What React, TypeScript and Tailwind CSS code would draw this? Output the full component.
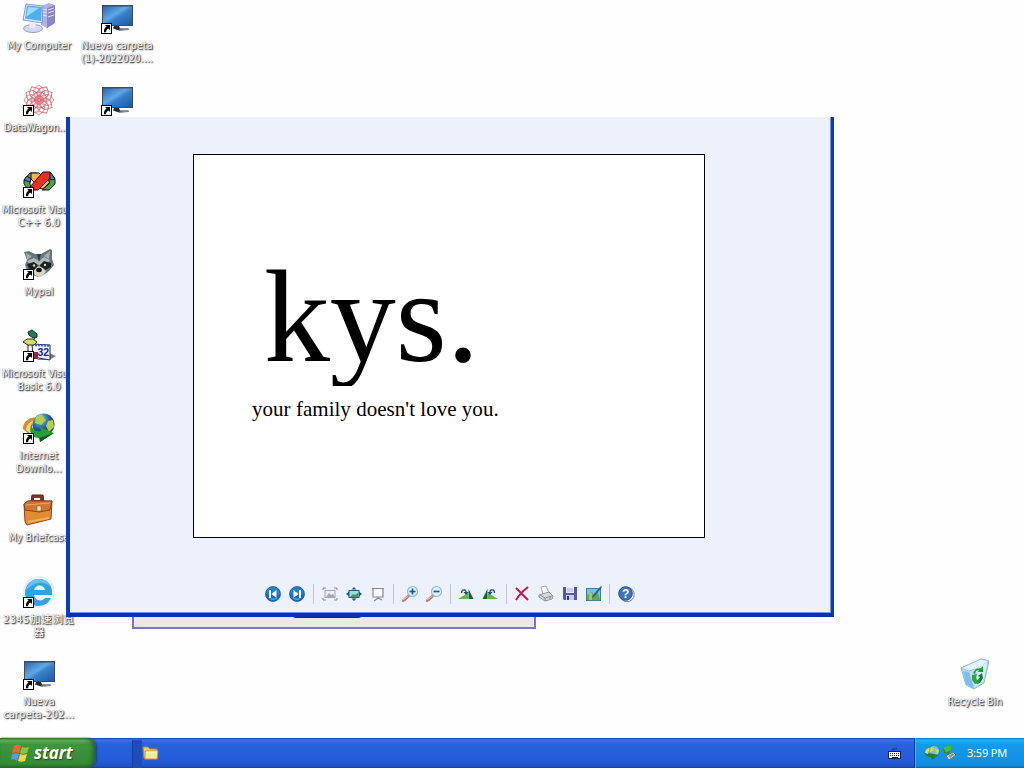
import React from "react";

type IconProps = { children: React.ReactNode };

const Glyph32 = ({ children }: IconProps) => (
  <svg width="32" height="34" viewBox="0 0 32 34" className="block overflow-visible">
    {children}
  </svg>
);

const ShortcutArrow = () => (
  <g>
    <rect x="0.5" y="20.5" width="10" height="10" fill="#fff" stroke="#000" />
    <path d="M4 22h5v5l-1.6-1.6C5.8 26.4 5 27.500 5 29.200H3c-.3-2.600.8-4.200 2.600-5.600z" fill="#000" />
  </g>
);

const Monitor = () => (
  <Glyph32>
    <defs>
      <linearGradient id="screen" x1="0" y1="0" x2="1" y2="1">
        <stop offset="0" stopColor="#2a67b4" />
        <stop offset="0.42" stopColor="#62a8e4" />
        <stop offset="0.55" stopColor="#3a80cb" />
        <stop offset="1" stopColor="#1d58a4" />
      </linearGradient>
    </defs>
    <rect x="1" y="2" width="31" height="21" fill="#3f4c58" />
    <rect x="2" y="3.500" width="29" height="18.500" fill="url(#screen)" />
    <path d="M13 23h5l1 2.500h8l1 1.500-10 .5-6-2z" fill="#222b30" />
    <path d="M18 27l10-.8" stroke="#839184" strokeWidth="1.200" />
    <ShortcutArrow />
  </Glyph32>
);

const Computer = () => (
  <Glyph32>
    <path d="M18 3l8-3 6 2v18l-8 5-6-3z" fill="#b3b1e2" />
    <path d="M24 5l8-3v18l-8 5z" fill="#8a86c9" />
    <path d="M19 6l5 1M19 9l5 1M19 12l5 1M25 7l6-2M25 10l6-2M25 14l6-2" stroke="#e2e1f8" />
    <path d="M3 1l17 2-1 17-19-3z" fill="#e2e8f8" stroke="#6f83b8" strokeWidth=".8" />
    <path d="M4 2.500l15 1.500-1 14L2 15.500z" fill="#4bb0ed" />
    <path d="M5 4l11 1-13 9z" fill="#9bdcfa" />
    <ellipse cx="10" cy="25.500" rx="9.500" ry="4" fill="#d5d8ee" stroke="#8388b1" strokeWidth=".8" />
    <path d="M6 19l7 1-1 5H7z" fill="#e8ebf9" />
  </Glyph32>
);

const petals = [0, 30, 60, 90, 120, 150, 180, 210, 240, 270, 300, 330];
const Atom = () => (
  <Glyph32>
    <g fill="none" stroke="#db6670" strokeWidth="0.9">
      {petals.map((a) => (
        <path key={a} d="M16 14C6 7 12 3 16 0c4 3 10 7 0 14" transform={`rotate(${a} 16 15)`} />
      ))}
      <circle cx="16" cy="15" r="8" />
      <circle cx="16" cy="15" r="4.500" />
    </g>
    <ShortcutArrow />
  </Glyph32>
);

const VisualCpp = () => (
  <Glyph32>
    <g stroke="#111" strokeWidth="1" strokeLinejoin="round">
      <path d="M1 13l6-7h7l-7 6v6l3 3H4l-3-4z" fill="#45a752" />
      <path d="M1 13l3-4 4 3-1 3z" fill="#4b83cf" />
      <path d="M8 6h8l3 3-7 7-4-4z" fill="#f5b63c" />
      <path d="M24 6h4l4 6v5l-6 6h-7l7-6V9z" fill="#49a646" />
      <path d="M14 21l9-9 4 3-7 7z" fill="#f7bd36" />
      <path d="M25 6h3l4 6-4 1z" fill="#4b83cf" />
      <path d="M7 20L20 5h7v6L15 23H8z" fill="#e43420" />
    </g>
    <ShortcutArrow />
  </Glyph32>
);

const Raccoon = () => (
  <Glyph32>
    <path d="M1 3l5-1 6 3h6l9-5 2 1v9l2 6-5 6-7 5-4 1-5-2-6-5-2-5 2-5z" fill="#66767c" />
    <path d="M3 4l6 3-5 4zM27 2l-6 5 5 3z" fill="#a1afb2" />
    <path d="M4 12l7-3 5 3 5-4 6 3-2 3-9 2-9 0z" fill="#aebaba" />
    <path d="M4 15l7-2 4 3-3 5-6-1zM17 16l4-4 7 2 0 4-6 3-4-1z" fill="#1b2326" />
    <circle cx="11" cy="16.500" r="1.200" fill="#e6d9b4" />
    <circle cx="22" cy="16" r="1.200" fill="#e6d9b4" />
    <path d="M10 23l3-4 3-2 4 2 3 3-3 5-4 1-4-2z" fill="#d5d4c6" />
    <ellipse cx="16" cy="21" rx="2.800" ry="2.200" fill="#101010" />
    <path d="M14 5l2 8 2-8" fill="#303b40" />
    <ShortcutArrow />
  </Glyph32>
);

const VisualBasic = () => (
  <Glyph32>
    <path d="M26 22l7 3-7 4H14z" fill="#7d7d7d" />
    <path d="M9 13l18 1v15l-17-3z" fill="#f3f5ff" stroke="#25256d" />
    <path d="M9 14l18 1" stroke="#4969c7" strokeWidth="2" strokeDasharray="2 1" />
    <text x="14.500" y="25" fontSize="10.500" fontWeight="700" fill="#22229b" fontFamily="Liberation Sans, sans-serif">32</text>
    <path d="M5 1l4-2 5 4v3l-4 1-4-3z" fill="#257b52" stroke="#172b1d" />
    <path d="M12 7l-3 4" stroke="#222" />
    <path d="M0 11l4-3h6l4 3-3 3H5z" fill="#d8d86e" stroke="#2d3717" />
    <path d="M5 14v6" stroke="#222" />
    <path d="M11 21h4v7h-4z" fill="#9d243f" />
    <ShortcutArrow />
  </Glyph32>
);

const DownloadGlobe = () => (
  <Glyph32>
    <defs>
      <radialGradient id="globe" cx="0.35" cy="0.25">
        <stop offset="0" stopColor="#c5e5ff" />
        <stop offset="0.5" stopColor="#428ed0" />
        <stop offset="1" stopColor="#185089" />
      </radialGradient>
    </defs>
    <path d="M0 16C0 7 9 3 14 5l-3 7c-4 1-5 4-4 10z" fill="#e78430" />
    <path d="M3 17c0-5 4-9 9-10l-4 7-1 6z" fill="#f7d969" />
    <circle cx="20.500" cy="11.500" r="11" fill="url(#globe)" />
    <path d="M13 4l6-3 1 3 3 3-5 5-6-2zM25 8l5-1 1 7-5 5-3-6z" fill="#b5cd48" />
    <path d="M9 10c-1 6 3 9 9 8l-1-4 14 6-14 9v-4C10 26 4 20 9 10z" fill="#299d35" />
    <path d="M16 25l15-5-14 9z" fill="#11581c" />
    <ShortcutArrow />
  </Glyph32>
);

const Briefcase = () => (
  <Glyph32>
    <path d="M8 7l1-7h11l1 7" fill="#8c302b" stroke="#66201d" />
    <path d="M11 5V3h6v2" fill="#fff" />
    <path d="M1 9l4-3h24l-1 18-24 6-2-3z" fill="#e38a35" stroke="#8e481d" />
    <path d="M1 9l4-3h24l-2 9-11 2-14-2z" fill="#ce7635" stroke="#8b431e" />
    <path d="M3 10l24-2" stroke="#eeaa61" />
    <path d="M5 27l21-4" stroke="#f0b25c" strokeWidth="2" />
    <rect x="14" y="11" width="4" height="5" fill="#f9e7ad" stroke="#996130" strokeWidth=".6" />
  </Glyph32>
);

const BrowserE = () => (
  <Glyph32>
    <circle cx="16" cy="15" r="15.500" fill="#edf4f8" stroke="#d8e2e9" strokeWidth=".6" />
    <path d="M29 18H11c1 6 8 7 11 3h6c-2 5-7 8-13 8C7 29 2 23 2 16 2 8 8 2 16 2c9 0 14 7 13 16zM11 13h11c-1-6-10-6-11 0z" fill="#36a0e5" />
    <path d="M3 13C5 5 11 2 16 2c6 0 10 3 12 8-7-7-17-5-25 3z" fill="#64c3f3" />
    <ShortcutArrow />
  </Glyph32>
);

const RecycleBin = () => (
  <Glyph32>
    <path d="M2 9l9-4 11-5 8 2-5 22-10 6-8-4z" fill="#b8def5" stroke="#7fa9c9" strokeWidth=".8" />
    <path d="M2 9l9-4 11-5 8 2-10 7-10 3z" fill="#e2f3fb" stroke="#8eb6d2" strokeWidth=".8" />
    <path d="M4 12l6 1 5 16-2 0-6-4z" fill="#80bde8" />
    <path d="M19 9l9-6-4 20-8 5z" fill="#d4effb" />
    <path d="M14 14l3-4 5-1 2-2v6h-5l1-2-3 1-1 3z" fill="#249d35" />
    <path d="M23 14l1 5-3 5-3 1v-3l3-4-2-1z" fill="#158126" />
    <path d="M13 16l5-1-1 3 1 3h2v3l-4 1-3-4z" fill="#2aa63c" />
  </Glyph32>
);

type ShortcutProps = {
  icon: React.ReactNode;
  place: string;
  lines: { text: string; tracking?: string }[];
};

const DesktopIcon = ({ icon, place, lines }: ShortcutProps) => (
  <div className={`absolute flex w-[78px] flex-col items-center ${place}`}>
    {icon}
    <div className="mt-[2px] flex flex-col items-center font-['DejaVu_Sans_Condensed','Noto_Sans_CJK_SC',sans-serif] text-[10.500px] leading-[13px] text-white [text-shadow:1px_1px_1px_#444,0_0_1px_#666,1px_1px_2px_#777]">
      {lines.map((line) => (
        <span key={line.text} className={`block whitespace-nowrap ${line.tracking ?? ""}`}>
          {line.text}
        </span>
      ))}
    </div>
  </div>
);

const Tool = ({ children }: IconProps) => (
  <svg width="16" height="16" viewBox="0 0 16 16" className="block shrink-0 overflow-visible">
    {children}
  </svg>
);

const Divider = () => <div className="h-5 w-px shrink-0 bg-[#c3c5cf]" />;

const Round = ({ flip }: { flip?: boolean }) => (
  <Tool>
    <circle cx="8" cy="8" r="7.500" fill="#1667bd" stroke="#164f9c" strokeWidth=".7" />
    <path d="M1 8a7 7 0 0114 0C10 10 6 10 1 8z" fill="#2480cd" />
    <path d="M3 11c2 4 8 4 10 0-3 2-7 2-10 0z" fill="#38b4ed" />
    <g transform={flip ? "translate(16 0) scale(-1 1)" : undefined} fill="#fff">
      <rect x="4" y="4" width="2" height="8" />
      <path d="M11.500 4v8L6.500 8z" />
    </g>
  </Tool>
);

const Magnifier = ({ plus }: { plus?: boolean }) => (
  <Tool>
    <path d="M1.500 14.500l5-4.500" stroke="#b77672" strokeWidth="2.800" strokeLinecap="round" />
    <path d="M1 14l5-4" stroke="#e8b092" strokeWidth="1.200" />
    <circle cx="10.500" cy="5.500" r="5" fill="#d9f3fa" stroke="#9bb9d1" strokeWidth="1.200" />
    <path d="M7.500 5.500h6" stroke="#235592" strokeWidth="1.700" />
    {plus && <path d="M10.500 2.500v6" stroke="#235592" strokeWidth="1.700" />}
  </Tool>
);

const Rotate = ({ flip }: { flip?: boolean }) => (
  <Tool>
    <g transform={flip ? "translate(16 0) scale(-1 1)" : undefined}>
      <path d="M0 13L10 7v6z" fill="#63b64a" />
      <path d="M10.500 13V3l5 10z" fill="#14652c" />
      <path d="M3.500 7c0-4 4.500-4 4.500-1" fill="none" stroke="#315b91" strokeWidth="1.500" />
      <path d="M5.500 6h5L8 9z" fill="#24477e" />
    </g>
  </Tool>
);

const ViewerToolbar = () => (
  <div className="ml-[195px] flex h-5 items-center">
    <div className="flex gap-2"><Round /><Round flip /></div>
    <div className="ml-2 flex items-center gap-2">
      <Divider />
      <Tool>
        <path d="M1 4V2h3M12 2h3v2M1 12v2h3M12 14h3v-2" fill="none" stroke="#85858f" />
        <rect x="3" y="4.500" width="10" height="7" fill="#eeeef4" stroke="#a4a4ae" />
        <path d="M4 11l3-4 2 2 2-1 2 3z" fill="#a6a6b0" />
      </Tool>
      <Tool>
        <rect x="3" y="4.500" width="10" height="7" fill="#9dd8e8" stroke="#315a78" />
        <path d="M4 11l3-3 2 1 3-2v4z" fill="#459f43" />
        <path d="M8 1L5.500 3.500h5zM8 15l-2.500-2.500h5zM0 8l3-2.500v5zM16 8l-3-2.500v5z" fill="#205488" />
      </Tool>
      <Tool>
        <path d="M3 4h10v7H3z" fill="#f8f8fb" />
        <path d="M2 2.500h12M3 3v8h10V3M8 11v2M8 12l-4 3M8 12l4 2" fill="none" stroke="#888791" strokeWidth="1.200" />
      </Tool>
    </div>
    <div className="ml-[7px] flex items-center gap-2">
      <Divider />
      <Magnifier plus />
      <Magnifier />
      <Divider />
    </div>
    <div className="ml-[7px] flex gap-2"><Rotate /><Rotate flip /></div>
    <div className="ml-2 flex items-center gap-2">
      <Divider />
      <div className="-ml-px"><Tool><path d="M2 2l12 12M14 1C9 5 5 9 2 14" fill="none" stroke="#ca1942" strokeWidth="2" /></Tool></div>
      <Tool>
        <path d="M3 1l5-1 3 7-6 1z" fill="#fff" stroke="#a8aab0" />
        <path d="M1 9l10-3 4 4-1 3-7 2-6-4z" fill="#d7dadc" stroke="#8d949a" />
        <path d="M2 9l5 3 7-2M7 12v3" fill="none" stroke="#848b92" />
        <circle cx="12" cy="12" r="1" fill="#b2a43f" />
      </Tool>
      <Tool>
        <path d="M1 1h14v13H2l-1-1z" fill="#5556a8" />
        <rect x="4" y="1" width="8" height="6" fill="#e9edfb" />
        <path d="M5 3h6M5 5h6" stroke="#a9b1d7" />
        <rect x="4" y="9" width="8" height="5" fill="#c9cce5" />
        <rect x="5" y="10" width="2" height="4" fill="#37387f" />
      </Tool>
      <Tool>
        <rect x=".5" y="2.500" width="14" height="12" fill="#6ec6e8" stroke="#467b99" />
        <path d="M1 14V9l5-3 2 4 4-3 2 7z" fill="#55ae50" />
        <path d="M3 7h3v7H3z" fill="#d9b43d" />
        <path d="M15 0L7 9l-1 3 3-2 7-9z" fill="#335c94" />
      </Tool>
    </div>
    <div className="ml-[7px] flex items-center gap-2">
      <Divider />
      <Tool>
        <circle cx="9" cy="8.500" r="7.200" fill="#eef2fd" stroke="#6c7fad" />
        <circle cx="7.500" cy="7.500" r="6.800" fill="#3e74bf" stroke="#27508b" />
        <text x="7.700" y="11.800" textAnchor="middle" fontSize="12" fontWeight="700" fill="#fff" fontFamily="Liberation Sans, sans-serif">?</text>
      </Tool>
    </div>
  </div>
);

const PictureViewer = () => (
  <div className="absolute left-[66px] top-[117px] flex h-[500px] w-[768px] flex-col border-b-4 border-l-4 border-r-[3px] border-b-[#0630b3] border-l-[#0b3bcb] border-r-[#0b35c0] bg-[#edf1fc] shadow-[inset_-1px_-1px_0_#6f97f0]">
    <div className="ml-[123px] mt-[37px] h-[384px] w-[512px] shrink-0 border border-black bg-white font-['Liberation_Serif',serif] text-black">
      <div className="ml-[70px] mt-[96px] h-[135px] overflow-hidden whitespace-nowrap text-[132px] leading-[132px] tracking-[-0.300px]">kys.</div>
      <div className="ml-[58px] mt-[11px] whitespace-nowrap text-[21px] leading-6 tracking-[0.030px]">your family doesn't love you.</div>
    </div>
    <div className="mt-[46px]"><ViewerToolbar /></div>
  </div>
);

const DownloadTray = () => (
  <svg width="16" height="16" viewBox="0 0 16 16" className="block">
    <circle cx="10" cy="6" r="5" fill="#79bde2" />
    <path d="M7 2l3 1-1 3-3 1zM11 4l4 1-2 5z" fill="#d9d84c" />
    <path d="M1 8c0-4 3-5 5-5L4 8l6 1 5 1-7 5-1-3C4 12 1 11 1 8z" fill="#2b7c2c" />
    <path d="M1 8c0-4 3-5 5-5L4 9z" fill="#f2d45b" />
  </svg>
);

const Taskbar = () => (
  <div className="absolute inset-x-0 bottom-0 flex h-[30px] bg-[linear-gradient(180deg,#1941a5_0px,#3a78e7_2px,#2862dc_5px,#245bd9_23px,#2053c5_28px,#183f9f_30px)]">
    <div className="flex w-[96px] shrink-0 items-center rounded-r-[9px] bg-[linear-gradient(180deg,#2b752b_0px,#6ab766_2px,#3d963e_6px,#388d38_20px,#348d34_26px,#276d2a_30px)] pl-[11px] shadow-[inset_-3px_0_4px_#245f29,1px_0_2px_#183f9f]">
      <svg width="20" height="20" viewBox="0 0 20 20" className="block">
        <path d="M3 3c3-2 5-1 7 0L8 10c-2-1-4-1-7 0z" fill="#ed6537" />
        <path d="M11 4c2 1 4 1 7 0l-2 6c-3 1-5 1-7 0z" fill="#87c744" />
        <path d="M1 11c3-1 5-1 7 0l-2 7c-2-2-4-2-6-1z" fill="#5b9ae7" />
        <path d="M9 11c2 1 4 1 7 0l-2 7c-3 1-5 1-7 0z" fill="#f5d347" />
      </svg>
      <span className="ml-[3px] font-['Open_Sans','Noto_Sans',sans-serif] text-[17px] font-bold italic leading-5 tracking-[-0.100px] text-[#fffdf0] [text-shadow:1px_1px_1px_#235020]">start</span>
    </div>
    <div className="ml-[36px] flex items-center">
      <div className="mt-[2px] h-7 w-[10px] border-l border-[#173f9b] bg-[#1d4dbb]" />
      <svg width="17" height="16" viewBox="0 0 17 16" className="block">
        <path d="M1 2h5l2 2h7v9H2z" fill="#f2ca55" stroke="#b68b2f" />
        <path d="M3 6h13l-1 8H3z" fill="#fae98f" stroke="#c7993a" />
        <path d="M4 7h11" stroke="#fff9ca" />
      </svg>
    </div>
    <div className="ml-auto flex items-center pr-3">
      <svg width="14" height="14" viewBox="0 0 14 14" className="mt-[1px] block">
        <path d="M4 3c0-2 4 0 5-2" fill="none" stroke="#172e62" />
        <rect x=".5" y="4.500" width="12" height="7" fill="#fff" stroke="#172453" />
        <path d="M2 6.500h10M2 8.500h10" stroke="#252b40" strokeDasharray="1 1" />
        <path d="M4 10.500h6" stroke="#252b40" />
      </svg>
    </div>
    <div className="flex w-[110px] items-center border-l border-[#0d3c9d] bg-[linear-gradient(180deg,#1670c4_0px,#1fb5f2_2px,#149be8_6px,#1290e4_22px,#118ad9_28px,#1160ae_30px)] pl-[9px] shadow-[inset_1px_0_0_#32bafa]">
      <DownloadTray />
      <svg width="16" height="16" viewBox="0 0 16 16" className="ml-[2px] block">
        <path d="M1 2l8-1v4l-3 4-4-1z" fill="#49bc3c" />
        <path d="M1 2l3 6 5-3-3 4-4-1z" fill="#217e32" />
        <path d="M4 11l7-4 3 3-7 5z" fill="#e4ecea" stroke="#607375" />
        <path d="M6 11l5-3 1 2-4 3z" fill="#7d9795" />
      </svg>
      <span className="ml-[9px] whitespace-nowrap font-['Noto_Sans',sans-serif] text-[11px] leading-4 tracking-[-0.200px] text-white">3:59 PM</span>
    </div>
  </div>
);

export default function App() {
  return (
    <div className="relative h-[768px] w-[1024px] overflow-hidden bg-[#fefefe]">
      <DesktopIcon place="left-0 top-[3px]" icon={<Computer />} lines={[{ text: "My Computer" }]} />
      <DesktopIcon place="left-[78px] top-[3px]" icon={<Monitor />} lines={[{ text: "Nueva carpeta", tracking: "tracking-[0.150px]" }, { text: "(1)-2022020....", tracking: "tracking-[0.050px]" }]} />
      <DesktopIcon place="left-0 top-[85px]" icon={<Atom />} lines={[{ text: "DataWagon...", tracking: "-ml-[6px]" }]} />
      <DesktopIcon place="left-[78px] top-[85px]" icon={<Monitor />} lines={[]} />
      <DesktopIcon place="left-0 top-[167px]" icon={<VisualCpp />} lines={[{ text: "Microsoft Visual" }, { text: "C++ 6.0", tracking: "tracking-[0.200px]" }]} />
      <DesktopIcon place="left-0 top-[249px]" icon={<Raccoon />} lines={[{ text: "Mypal", tracking: "tracking-[0.200px]" }]} />
      <DesktopIcon place="left-0 top-[331px]" icon={<VisualBasic />} lines={[{ text: "Microsoft Visual" }, { text: "Basic 6.0" }]} />
      <DesktopIcon place="left-0 top-[413px]" icon={<DownloadGlobe />} lines={[{ text: "Internet", tracking: "tracking-[0.200px]" }, { text: "Downlo...", tracking: "tracking-[0.200px]" }]} />
      <DesktopIcon place="left-0 top-[495px]" icon={<Briefcase />} lines={[{ text: "My Briefcase" }]} />
      <DesktopIcon place="left-0 top-[577px]" icon={<BrowserE />} lines={[{ text: "2345加速浏览", tracking: "tracking-[0.700px]" }, { text: "器" }]} />
      <DesktopIcon place="left-0 top-[659px]" icon={<Monitor />} lines={[{ text: "Nueva", tracking: "tracking-[0.200px]" }, { text: "carpeta-202...", tracking: "tracking-[0.300px]" }]} />
      <DesktopIcon place="left-[936px] top-[659px]" icon={<RecycleBin />} lines={[{ text: "Recycle Bin" }]} />
      <div className="absolute left-[132px] top-[600px] h-[29px] w-[404px] border-2 border-[#7779c5] bg-[#ece9e4]" />
      <div className="absolute left-[292px] top-[610px] h-2 w-[70px] rounded-b-sm bg-[#03259a]" />
      <PictureViewer />
      <Taskbar />
    </div>
  );
}
